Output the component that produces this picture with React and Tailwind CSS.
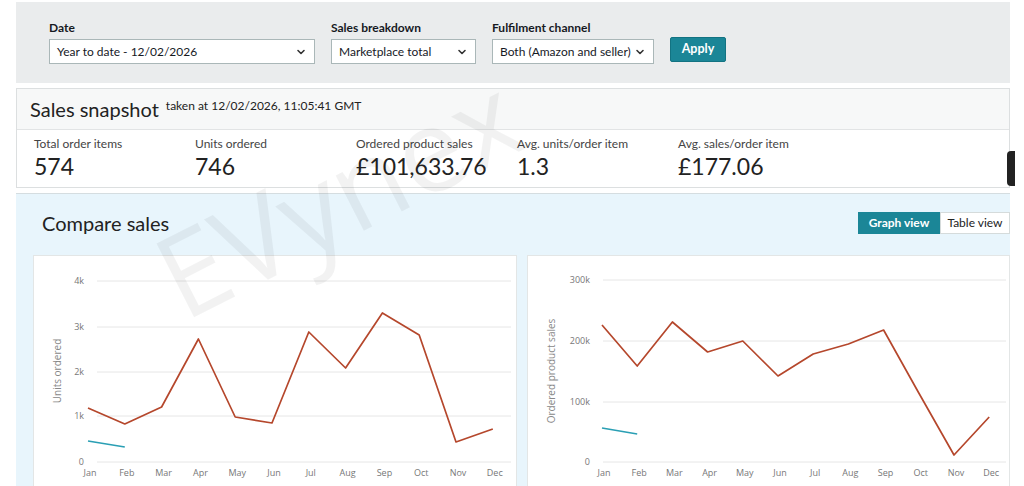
import React from 'react'

const months = ['Jan', 'Feb', 'Mar', 'Apr', 'May', 'Jun', 'Jul', 'Aug', 'Sep', 'Oct', 'Nov', 'Dec']

function Chevron() {
  return (
    <svg className="w-[10px] h-[10px] shrink-0" viewBox="0 0 10 10" fill="none" stroke="#333" strokeWidth="1.6">
      <path d="M2 3.5l3 3 3-3" strokeLinecap="round" strokeLinejoin="round" />
    </svg>
  )
}

function Select({ label, value, width }) {
  return (
    <div className="flex flex-col">
      <span className="text-[12px] font-bold text-[#16191f] leading-[16px] mb-[3px]">{label}</span>
      <div className={`${width} h-[25px] bg-white border border-[#aab7b8] flex items-center justify-between pl-[7px] pr-[8px]`}>
        <span className="text-[12px] text-[#16191f] whitespace-nowrap">{value}</span>
        <Chevron />
      </div>
    </div>
  )
}

function Metric({ label, value }) {
  return (
    <div className="w-[161px] flex flex-col">
      <span className="text-[12px] text-[#444] leading-[14px]">{label}</span>
      <span className="text-[23px] text-[#222] leading-[30px]">{value}</span>
    </div>
  )
}

function Chart({ width, yLabel, ticks, gx0, gx1, labelRight, px0, pstep, orange, blue }) {
  const orangePts = orange.map((y, i) => `${px0 + pstep * i},${y}`).join(' ')
  const bluePts = blue.map((y, i) => `${px0 + pstep * i},${y}`).join(' ')
  return (
    <div className="bg-white border border-[#e3e6e6] h-[240px] shrink-0" style={{ width }}>
      <svg width={width} height="240" viewBox={`0 0 ${width} 240`} fontFamily="'Open Sans', sans-serif">
        {ticks.map((t) => (
          <g key={t.label}>
            <line x1={gx0} x2={gx1} y1={t.y} y2={t.y} stroke="#e6e6e6" strokeWidth="1" />
            <text x={labelRight} y={t.y + 3} fontSize="9" fill="#777" textAnchor="end">{t.label}</text>
          </g>
        ))}
        <text
          x="0"
          y="0"
          fontSize="10"
          fill="#888"
          textAnchor="middle"
          transform={`translate(${yLabel.x} 115) rotate(-90)`}
        >
          {yLabel.text}
        </text>
        <polyline points={orangePts} fill="none" stroke="#b5472c" strokeWidth="1.7" strokeLinejoin="round" />
        <polyline points={bluePts} fill="none" stroke="#2a9fb4" strokeWidth="1.7" />
        {months.map((m, i) => (
          <text key={m} x={px0 + pstep * i + 2} y="220" fontSize="9" fill="#777" textAnchor="middle">{m}</text>
        ))}
      </svg>
    </div>
  )
}

export default function App() {
  const leftOrange = [407, 423, 406, 338, 416, 422, 331, 367, 312, 334, 441, 428].map((y) => y - 255)
  const rightOrange = [324, 365, 321, 351, 340, 375, 353, 343, 329, 392, 454, 416].map((y) => y - 255)

  return (
    <div className="relative w-[1024px] h-[486px] overflow-hidden bg-white" style={{ fontFamily: "Lato, 'Open Sans', sans-serif" }}>
      <div className="ml-[16px] w-[994px]">
        {/* filters */}
        <div className="mt-[2px] h-[81px] bg-[#eaeced] flex items-start gap-[16px] pl-[33px] pt-[18px]">
          <Select label="Date" value="Year to date - 12/02/2026" width="w-[266px]" />
          <Select label="Sales breakdown" value="Marketplace total" width="w-[145px]" />
          <Select label="Fulfilment channel" value="Both (Amazon and seller)" width="w-[162px]" />
          <button className="mt-[17px] h-[25px] w-[56px] bg-[#1b8697] border border-[#137382] rounded-[2px] text-white text-[12.5px] font-bold">
            Apply
          </button>
        </div>

        {/* snapshot */}
        <div className="mt-[5px] border border-[#dcdfe0]">
          <div className="h-[41px] bg-[#f7f8f8] border-b border-[#e2e4e5] flex items-center pl-[13px] gap-[7px]">
            <span className="text-[20px] text-[#222] leading-none">Sales snapshot</span>
            <span className="text-[12px] text-[#222] -mt-[6px]">taken at 12/02/2026, 11:05:41 GMT</span>
          </div>
          <div className="h-[57px] bg-white flex pl-[17px] pt-[7px]">
            <Metric label="Total order items" value="574" />
            <Metric label="Units ordered" value="746" />
            <Metric label="Ordered product sales" value="£101,633.76" />
            <Metric label="Avg. units/order item" value="1.3" />
            <Metric label="Avg. sales/order item" value="£177.06" />
          </div>
        </div>

        {/* compare sales */}
        <div className="mt-[5px] h-[300px] bg-[#e8f5fc] border-t border-[#d5dde0] pl-[17px]">
          <div className="h-[61px] flex items-center justify-between">
            <span className="text-[20px] text-[#222] pl-[9px] -mt-[4px]">Compare sales</span>
            <div className="flex h-[22px] -mt-[4px]">
              <div className="w-[82px] bg-[#1b8697] text-white text-[12px] font-bold flex items-center justify-center">Graph view</div>
              <div className="w-[70px] bg-white border border-[#d5dbdb] text-[#222] text-[12px] flex items-center justify-center">Table view</div>
            </div>
          </div>
          <div className="flex gap-[10px]">
            <Chart
              width={484}
              yLabel={{ x: 27, text: 'Units ordered' }}
              ticks={[
                { label: '4k', y: 25 },
                { label: '3k', y: 71 },
                { label: '2k', y: 116 },
                { label: '1k', y: 160 },
                { label: '0', y: 206 },
              ]}
              gx0={63}
              gx1={477}
              labelRight={50}
              px0={54}
              pstep={36.8}
              orange={leftOrange}
              blue={[185, 191]}
            />
            <Chart
              width={483}
              yLabel={{ x: 27, text: 'Ordered product sales' }}
              ticks={[
                { label: '300k', y: 24 },
                { label: '200k', y: 85 },
                { label: '100k', y: 146 },
                { label: '0', y: 206 },
              ]}
              gx0={75}
              gx1={478}
              labelRight={62}
              px0={74}
              pstep={35.2}
              orange={rightOrange}
              blue={[172, 178]}
            />
          </div>
        </div>
      </div>

      {/* dark pill at right edge */}
      <div className="absolute left-[1007px] top-[151px] w-[8px] h-[35px] rounded-l-[4px] bg-[#222]" />

      {/* watermark */}
      <div
        className="absolute left-[190px] top-[218px] text-[116px] leading-none text-black/[0.05] pointer-events-none select-none"
        style={{ transform: 'rotate(-27deg)', transformOrigin: 'left bottom', fontFamily: "'Open Sans', sans-serif" }}
      >
        EVynex
      </div>
    </div>
  )
}
